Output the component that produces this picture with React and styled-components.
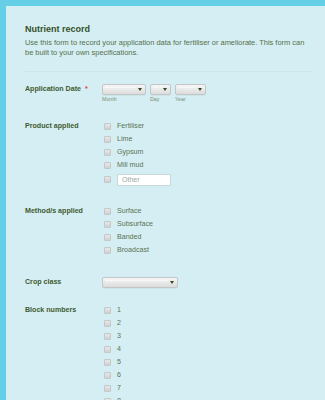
import React from 'react';
import styled, { createGlobalStyle } from 'styled-components';

const GlobalStyle = createGlobalStyle`
  html, body {
    margin: 0;
    padding: 0;
    height: 100%;
    overflow: hidden;
    background: #64cfe6;
    font-family: "Liberation Sans", Arial, sans-serif;
  }
`;

const Page = styled.div`
  padding: 6px 0 0 6px;
`;

const Panel = styled.form`
  background: #d5eef4;
  min-height: 394px;
  padding: 18px 12px 0 19px;
  box-sizing: border-box;
`;

const Title = styled.h2`
  margin: 0;
  font-size: 9px;
  line-height: 11px;
  font-weight: bold;
  color: #34502a;
`;

const Description = styled.p`
  margin: 2.5px 0 0;
  font-size: 7.45px;
  line-height: 10px;
  color: #55704a;
`;

const Divider = styled.hr`
  margin: 13px 0 0;
  border: 0;
  height: 1px;
  background: #cde6ec;
`;

const Row = styled.div`
  display: flex;
  align-items: flex-start;
  margin-top: ${({ space }) => space}px;
`;

const Label = styled.div`
  width: 77px;
  flex-shrink: 0;
  font-size: 7.1px;
  font-weight: bold;
  line-height: ${({ lh }) => lh || 13}px;
  color: #3f5b2f;
`;

const Required = styled.span`
  color: #e0403a;
  margin-left: 4px;
`;

const Options = styled.div`
  display: flex;
  flex-direction: column;
`;

const Option = styled.label`
  display: flex;
  align-items: center;
  height: 13px;
  font-size: 7.1px;
  color: #5b7352;
`;

const OtherOption = styled(Option)`
  height: auto;
  margin-top: 2px;
`;

const Box = styled.span`
  width: 5px;
  height: 5px;
  margin: 0 6px 0 2px;
  border: 1px solid #c3c8c9;
  border-radius: 1px;
  background: linear-gradient(#e8e8e8, #d0d0d0);
  flex-shrink: 0;
`;

const OtherInput = styled.input`
  width: 54px;
  height: 12px;
  box-sizing: border-box;
  border: 1px solid #c9d8dc;
  background: #fff;
  padding: 0 4px;
  font-family: inherit;
  font-size: 7px;
  color: #5b7352;
  outline: none;

  &::placeholder {
    color: #9aa8a4;
  }
`;

const DateGroup = styled.div`
  display: flex;
  gap: 4px;
`;

const DatePart = styled.div`
  display: flex;
  flex-direction: column;
`;

const Select = styled.div`
  position: relative;
  width: ${({ w }) => w}px;
  height: 11px;
  box-sizing: border-box;
  border: 1px solid #c2c6c6;
  border-radius: 2px;
  background: linear-gradient(#f6f6f6, #dcdcdc);
  box-shadow: 0 1px 0 rgba(0, 0, 0, 0.04);

  &::before {
    content: '';
    position: absolute;
    left: 3px;
    right: 9px;
    top: 2px;
    border-top: 1px dotted #ffffff;
  }

  &::after {
    content: '';
    position: absolute;
    right: 3px;
    top: 3px;
    border-left: 2px solid transparent;
    border-right: 2px solid transparent;
    border-top: 3px solid #2f4a22;
  }
`;

const SubLabel = styled.span`
  font-size: 5.3px;
  line-height: 8px;
  color: #7b9070;
`;

const CheckList = ({ items, other }) => (
  <Options>
    {items.map((item) => (
      <Option key={item}>
        <Box />
        {item}
      </Option>
    ))}
    {other && (
      <OtherOption>
        <Box />
        <OtherInput placeholder="Other" />
      </OtherOption>
    )}
  </Options>
);

const App = () => (
  <Page>
    <GlobalStyle />
    <Panel>
      <Title>Nutrient record</Title>
      <Description>
        Use this form to record your application data for fertiliser or
        ameliorate. This form can be built to your own specifications.
      </Description>
      <Divider />

      <Row space={12}>
        <Label lh={11}>
          Application Date
          <Required>*</Required>
        </Label>
        <DateGroup>
          <DatePart>
            <Select w={44} />
            <SubLabel>Month</SubLabel>
          </DatePart>
          <DatePart>
            <Select w={21} />
            <SubLabel>Day</SubLabel>
          </DatePart>
          <DatePart>
            <Select w={31} />
            <SubLabel>Year</SubLabel>
          </DatePart>
        </DateGroup>
      </Row>

      <Row space={17}>
        <Label>Product applied</Label>
        <CheckList items={['Fertiliser', 'Lime', 'Gypsum', 'Mill mud']} other />
      </Row>

      <Row space={19}>
        <Label>Method/s applied</Label>
        <CheckList items={['Surface', 'Subsurface', 'Banded', 'Broadcast']} />
      </Row>

      <Row space={20}>
        <Label lh={11}>Crop class</Label>
        <Select w={76} />
      </Row>

      <Row space={16}>
        <Label>Block numbers</Label>
        <CheckList items={['1', '2', '3', '4', '5', '6', '7', '8']} />
      </Row>
    </Panel>
  </Page>
);

export default App;
